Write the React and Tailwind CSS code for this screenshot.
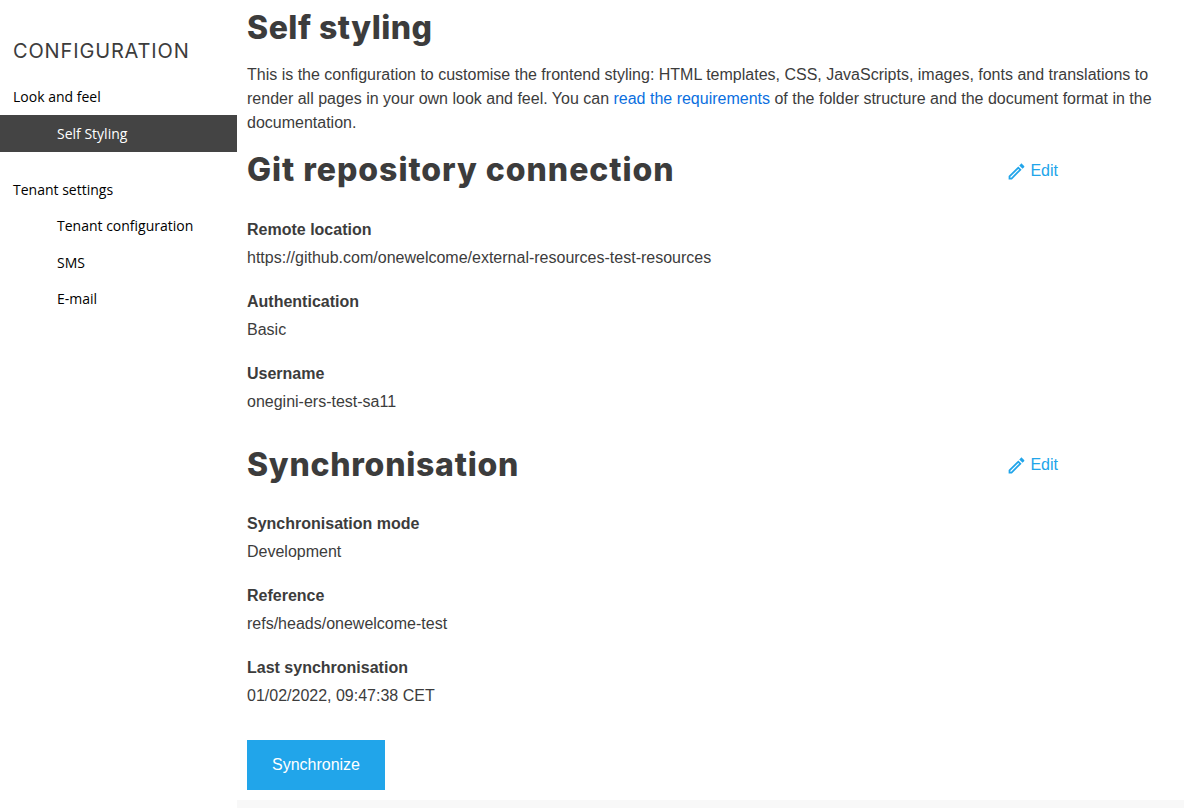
import React from "react";

const sans = "font-['Open_Sans',sans-serif]";
const arial = "font-['Liberation_Sans',Arial,sans-serif]";
const mont = "font-['Inter',sans-serif]";

function Pencil() {
  return (
    <svg width="21" height="21" viewBox="0 0 24 24" fill="none" className="text-[#21a5ea]">
      <path fill="currentColor" d="M3 17.25V21h3.75L17.81 9.94l-3.75-3.75L3 17.25zM5.92 19H5v-.92l9.06-9.06.92.92L5.92 19zM20.71 7.04c.39-.39.39-1.02 0-1.41l-2.34-2.34c-.39-.39-1.02-.39-1.41 0l-1.83 1.83 3.75 3.75 1.83-1.83z" />
    </svg>
  );
}

function Field({ label, value }) {
  return (
    <div className="mb-[16px]">
      <div className="font-bold text-[16px] leading-[28px] h-[28px] text-[#3c3c3c]">{label}</div>
      <div className="text-[16px] leading-[28px] h-[28px] text-[#3c3c3c]">{value}</div>
    </div>
  );
}

function Heading({ children, editClass, titleClass }) {
  return (
    <div className="flex items-center justify-between w-[811px]">
      <h2 className={`${mont} font-extrabold text-[32px] leading-[40px] text-[#3c3c3c] ${titleClass}`}>{children}</h2>
      <a className={`flex items-center gap-[3px] text-[16px] text-[#21a5ea] ${editClass}`}><Pencil />Edit</a>
    </div>
  );
}

export default function App() {
  return (
    <div className={`${arial} flex h-[808px] overflow-hidden bg-white`}>
      <aside className={`${sans} w-[237px] shrink-0 text-[14px] text-black`}>
        <div className={`${mont} pl-[13px] pt-[38px] text-[20px] tracking-[0.85px] leading-[26px] text-[#3c3c3c]`}>CONFIGURATION</div>
        <div className="pl-[13px] mt-[20px] leading-[26px]">Look and feel</div>
        <div className="pl-[57px] mt-[5px] h-[37px] leading-[37px] bg-[#444444] text-white">Self Styling</div>
        <div className="pl-[13px] mt-[25px] leading-[26px]">Tenant settings</div>
        <div className="pl-[57px] mt-[5px] leading-[36.5px]">Tenant configuration</div>
        <div className="pl-[57px] leading-[36.5px]">SMS</div>
        <div className="pl-[57px] leading-[36.5px]">E-mail</div>
      </aside>
      <main className="flex-1 flex flex-col">
        <div className="flex-1 pl-[10px] pr-[30px]">
          <h1 className={`${mont} font-extrabold tracking-[0.5px] text-[32px] leading-[40px] mt-[8px] text-[#3c3c3c]`}>Self styling</h1>
          <p className="mt-[15px] text-[16px] leading-[24px] text-[#3c3c3c]">
            This is the configuration to customise the frontend styling: HTML templates, CSS, JavaScripts, images, fonts and translations to render all pages in your own look and feel. You can <a className="text-[#0b6fe0]">read the requirements</a> of the folder structure and the document format in the documentation.
          </p>
          <div className="mt-[15px]"><Heading editClass="pt-[2px]" titleClass="tracking-[0.97px]">Git repository connection</Heading></div>
          <div className="mt-[26px]">
            <Field label="Remote location" value="https://github.com/onewelcome/external-resources-test-resources" />
            <Field label="Authentication" value="Basic" />
            <Field label="Username" value="onegini-ers-test-sa11" />
          </div>
          <div className="mt-[29px]"><Heading editClass="" titleClass="tracking-[0.74px]">Synchronisation</Heading></div>
          <div className="mt-[25px]">
            <Field label="Synchronisation mode" value="Development" />
            <Field label="Reference" value="refs/heads/onewelcome-test" />
            <Field label="Last synchronisation" value="01/02/2022, 09:47:38 CET" />
          </div>
          <button className="mt-[14px] w-[138px] h-[50px] bg-[#21a5ea] text-white text-[16px]">Synchronize</button>
        </div>
        <div className="h-[8px] bg-[#f8f8f8]" />
      </main>
    </div>
  );
}
